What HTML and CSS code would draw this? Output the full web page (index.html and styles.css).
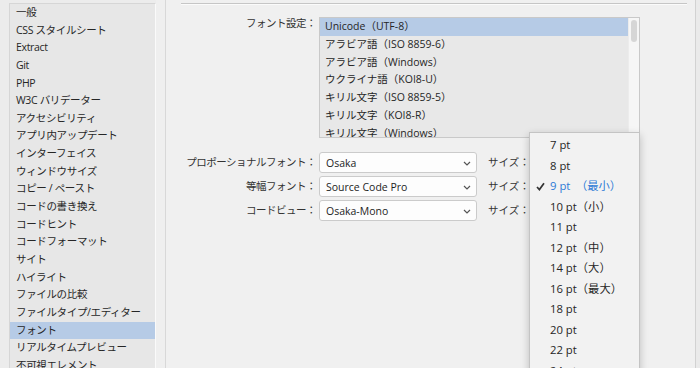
FILE: index.html
```html
<!DOCTYPE html>
<html lang="ja">
<head>
<meta charset="utf-8">
<title>環境設定 - フォント</title>
<link rel="stylesheet" href="styles.css">
</head>
<body>
<div class="window">
  <div class="side-wrap">
    <ul class="side">
      <li>一般</li>
      <li>CSS スタイルシート</li>
      <li>Extract</li>
      <li>Git</li>
      <li>PHP</li>
      <li>W3C バリデーター</li>
      <li>アクセシビリティ</li>
      <li>アプリ内アップデート</li>
      <li>インターフェイス</li>
      <li>ウィンドウサイズ</li>
      <li>コピー / ペースト</li>
      <li>コードの書き換え</li>
      <li>コードヒント</li>
      <li>コードフォーマット</li>
      <li>サイト</li>
      <li>ハイライト</li>
      <li>ファイルの比較</li>
      <li>ファイルタイプ/エディター</li>
      <li class="sel">フォント</li>
      <li>リアルタイムプレビュー</li>
      <li>不可視エレメント</li>
    </ul>
    <div class="track"></div>
  </div>
  <div class="main">
    <div class="rule"></div>
    <div class="form">
      <div class="enc-row">
        <div class="label enc-label">フォント設定：</div>
        <div class="listbox">
          <ul class="enc-list">
            <li class="sel">Unicode（UTF-8）</li>
            <li>アラビア語（ISO 8859-6）</li>
            <li>アラビア語（Windows）</li>
            <li>ウクライナ語（KOI8-U）</li>
            <li>キリル文字（ISO 8859-5）</li>
            <li>キリル文字（KOI8-R）</li>
            <li>キリル文字（Windows）</li>
          </ul>
          <div class="vscroll"><div class="thumb"></div></div>
        </div>
      </div>
      <div class="font-rows">
        <div class="frow">
          <div class="label">プロポーショナルフォント：</div>
          <div class="select"><span>Osaka</span><svg class="chev" width="8" height="5" viewBox="0 0 8 5"><polyline points="1,1 4,4 7,1" fill="none" stroke="#555" stroke-width="1.2"/></svg></div>
          <div class="size">サイズ：</div>
        </div>
        <div class="frow">
          <div class="label">等幅フォント：</div>
          <div class="select"><span>Source Code Pro</span><svg class="chev" width="8" height="5" viewBox="0 0 8 5"><polyline points="1,1 4,4 7,1" fill="none" stroke="#555" stroke-width="1.2"/></svg></div>
          <div class="size">サイズ：</div>
        </div>
        <div class="frow">
          <div class="label">コードビュー：</div>
          <div class="select"><span>Osaka-Mono</span><svg class="chev" width="8" height="5" viewBox="0 0 8 5"><polyline points="1,1 4,4 7,1" fill="none" stroke="#555" stroke-width="1.2"/></svg></div>
          <div class="size">サイズ：</div>
        </div>
      </div>
    </div>
  </div>
  <div class="edge"></div>
  <ul class="menu">
    <li>7 pt</li>
    <li>8 pt</li>
    <li class="checked"><svg class="check" width="9" height="9" viewBox="0 0 9 9"><path d="M1 5 L3.4 7.6 L8 1.2" fill="none" stroke="#333" stroke-width="1.7"/></svg>9 pt&ensp;（最小）</li>
    <li>10 pt（小）</li>
    <li>11 pt</li>
    <li>12 pt（中）</li>
    <li>14 pt（大）</li>
    <li>16 pt（最大）</li>
    <li>18 pt</li>
    <li>20 pt</li>
    <li>22 pt</li>
    <li>24 pt</li>
  </ul>
</div>
</body>
</html>
```

FILE: styles.css
```css
* { box-sizing: border-box; }
html, body { margin: 0; padding: 0; }
body {
  width: 700px;
  height: 368px;
  overflow: hidden;
  background: #ececec;
  font-family: "Open Sans", "Noto Sans CJK JP", sans-serif;
  font-size: 10.5px;
  color: #262626;
}
ul { list-style: none; margin: 0; padding: 0; }

.window {
  position: relative;
  display: flex;
  width: 700px;
  height: 368px;
}

.side-wrap {
  display: flex;
  padding: 3px 0 0 9px;
  background: #ececec;
}
.side {
  width: 147px;
  height: 380px;
  background: #e7e7e7;
  border-top: 1px solid #d6d6d6;
  border-left: 1px solid #d6d6d6;
  border-right: 1px solid #fafafa;
}
.side li {
  height: 17.65px;
  line-height: 17.65px;
  padding-left: 6px;
  white-space: nowrap;
  letter-spacing: -0.35px;
}
.side li.sel { background: #b6cbe6; }
.track {
  width: 10px;
  margin-top: -3px;
  background: #efefef;
  border-right: 1px solid #d8d8d8;
}

.main {
  flex: 1;
  background: #f0f0f0;
  border-right: 1px solid #d2d2d2;
}
.edge { width: 4px; background: #eaeaea; }

.rule {
  margin: 3px 8px 0 15px;
  border-top: 1px solid #c6c6c6;
  border-bottom: 1px solid #fbfbfb;
}
.form { padding-top: 12px; }

.label {
  width: 150px;
  flex: none;
  text-align: right;
  margin-right: 3px;
  color: #333;
  white-space: nowrap;
  letter-spacing: -0.5px;
}
.enc-row { display: flex; }
.enc-label { line-height: 13px; }

.listbox {
  position: relative;
  width: 321px;
  height: 121px;
  border: 1px solid #c9c9c9;
  background: #e8e8e8;
  overflow: hidden;
}
.enc-list { margin-right: 11px; }
.enc-list li {
  height: 17.8px;
  line-height: 17.8px;
  padding-left: 5px;
  white-space: nowrap;
}
.enc-list li.sel { background: #b6cbe6; }
.vscroll {
  position: absolute;
  top: 0;
  right: 0;
  bottom: 0;
  width: 11px;
  background: #f6f6f6;
  border-left: 1px solid #ececec;
}
.thumb {
  margin: 2px 0 0 2px;
  width: 6px;
  height: 22px;
  border-radius: 3px;
  background: #d6d6d6;
}

.font-rows {
  display: flex;
  flex-direction: column;
  gap: 3px;
  margin-top: 14px;
}
.frow {
  display: flex;
  align-items: center;
  height: 21px;
}
.frow .label { margin-top: -2px; }
.select {
  display: flex;
  align-items: center;
  justify-content: space-between;
  width: 158px;
  height: 21px;
  padding: 0 4px 0 6px;
  background: #fdfdfd;
  border: 1px solid #cbcbcb;
  border-radius: 3px;
  color: #1e1e1e;
}
.chev { margin-right: 1px; margin-top: 1px; }
.size {
  margin-left: 11px;
  margin-top: -2px;
  color: #333;
  white-space: nowrap;
}

.menu {
  position: absolute;
  left: 529px;
  top: 132px;
  width: 111px;
  height: 250px;
  padding-top: 2px;
  background: #f2f2f2;
  border: 1px solid #c4c4c4;
  box-shadow: 0 3px 8px rgba(0, 0, 0, 0.22);
  font-size: 11.3px;
}
.menu li {
  position: relative;
  height: 20.5px;
  line-height: 20.5px;
  padding-left: 20px;
  white-space: nowrap;
  color: #262626;
}
.menu li.checked { color: #2f7bd6; }
.check {
  position: absolute;
  left: 6px;
  top: 6px;
}
```
